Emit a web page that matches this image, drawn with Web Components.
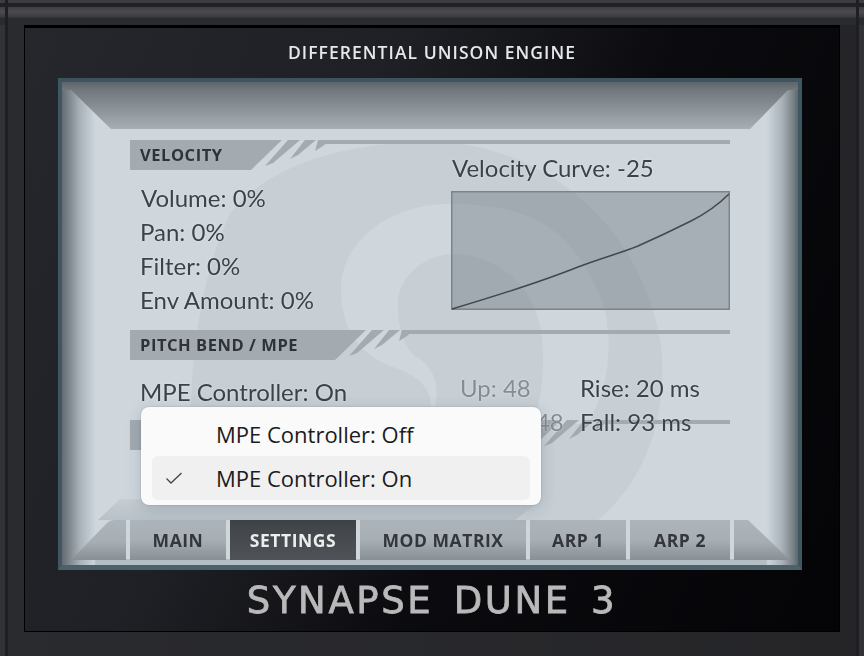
<!DOCTYPE html>
<html lang="en"><head><meta charset="utf-8"><title>Synapse Dune 3</title>
<style>html,body{margin:0;padding:0;background:#27282c}</style></head>
<body>
<synth-app>
  <span slot="title">DIFFERENTIAL UNISON ENGINE</span>
  <synth-display>
    <synth-section>
      <sec-head band="0">VELOCITY</sec-head>
      <param-list slot="left">
        <param-line style="margin-left:1px">Volume: 0%</param-line>
        <param-line>Pan: 0%</param-line>
        <param-line>Filter: 0%</param-line>
        <param-line>Env Amount: 0%</param-line>
      </param-list>
      <curve-graph slot="right" label="Velocity Curve: -25"></curve-graph>
    </synth-section>
    <synth-section style="height:90px">
      <sec-head band="84">PITCH BEND / MPE</sec-head>
      <param-list slot="left"><param-line style="margin-top:4px">MPE Controller: On</param-line></param-list>
      <bend-grid slot="right">
        <param-line dim>Up: 48</param-line><param-line>Rise: 20 ms</param-line>
        <param-line dim>Down: 48</param-line><param-line>Fall: 93 ms</param-line>
      </bend-grid>
    </synth-section>
    <synth-section style="height:100px">
      <sec-head band="279"></sec-head>
    </synth-section>
    <tab-bar slot="tabs">
      <synth-tab>MAIN</synth-tab>
      <synth-tab active style="width:126px">SETTINGS</synth-tab>
      <synth-tab style="width:166px">MOD MATRIX</synth-tab>
      <synth-tab>ARP 1</synth-tab>
      <synth-tab style="width:100px">ARP 2</synth-tab>
    </tab-bar>
    <ctx-menu slot="overlay">
      <ctx-item>MPE Controller: Off</ctx-item>
      <ctx-item checked>MPE Controller: On</ctx-item>
    </ctx-menu>
  </synth-display>
  <span slot="logo">SYNAPSE DUNE 3</span>
</synth-app>
<script>
function define(name, css, html, setup){
  customElements.define(name, class extends HTMLElement{
    constructor(){
      super();
      const r=this.attachShadow({mode:'open'});
      r.innerHTML='<style>'+css+'</style>'+(typeof html==='function'?html(this):html);
    }
    connectedCallback(){ if(setup) setup(this,this.shadowRoot); }
  });
}
define('synth-app',`
  :host{display:block;width:864px;height:656px;box-sizing:border-box;overflow:hidden;
    padding:0 5px;
    background:
      linear-gradient(to bottom,#3d3d41 0,#3d3d41 3px,#202124 3px,#202124 7px,#3e3e43 7px,#4a4a4f 12px,#3a3a3f 17px,#2a2b2f 18px,#2a2b2f 25px,transparent 25px),
      linear-gradient(to right,#333337 0,#333337 5px,transparent 5px,transparent 859px,#333337 859px),
      linear-gradient(to right,#2a2b2f,#252528);}
  .outer{box-sizing:border-box;padding:25px 19px 24px 19px;height:656px;
    background:linear-gradient(to right,#1e1f22 0,#1e1f22 3px,transparent 3px,transparent 851px,#1e1f22 851px);}
  .panel{box-sizing:border-box;height:607px;border:solid #000;border-width:3px 1px;border-bottom-width:1px;
    display:flex;flex-direction:column;
    background:linear-gradient(115deg,#25272c 0,#1f2025 35%,#0b0b0f 60%,#040407 100%);}
  .title{height:50px;flex:none;display:flex;align-items:center;justify-content:center;
    font:600 17.5px "Open Sans",sans-serif;letter-spacing:1.05px;color:#e6e7e8;filter:blur(.3px);padding-bottom:2px;box-sizing:border-box}
  .mid{flex:none;margin:0 33px}
  .logo{flex:1;display:flex;align-items:center;justify-content:center;
    font:400 37px "DejaVu Sans",sans-serif;letter-spacing:2.6px;word-spacing:6px;color:#b9b9ba;-webkit-text-stroke:.8px #b9b9ba;filter:blur(.3px);white-space:pre;padding-bottom:1px;box-sizing:border-box}
`,`<div class="outer"><div class="panel">
   <div class="title"><slot name="title"></slot></div>
   <div class="mid"><slot></slot></div>
   <div class="logo"><slot name="logo"></slot></div>
 </div></div>`);

define('synth-display',`
  :host{display:block;position:relative;box-sizing:border-box;height:492px;width:744px;
    border:solid #3f5760;border-width:4px 4px 5px 4px;border-color:#3d545c #3f5760 #4c626b #3f5760;
    background:
      linear-gradient(to bottom,#5c656b 0,#70777d 8px,transparent 8px),
      linear-gradient(to right,#646c72 0,#7a8288 6px,#a9b2b8 18px,#cbd3da 32px,transparent 34px),
      linear-gradient(to left,#5b686f 0,#7a8288 5px,#a9b2b8 16px,#cbd3da 30px,transparent 32px),
      linear-gradient(to bottom,transparent 0,transparent 477px,#b3bec4 477px),
      #cfd7dd;}
  .swirl{position:absolute;left:-4px;top:-4px;width:744px;height:492px;pointer-events:none}
  .cap{position:relative;height:39px;margin:8px 10px 11px 9px;
    background:linear-gradient(to bottom,#70777d,#a7afb5);
    clip-path:polygon(0 0,40px 39px,679px 39px,717px 0)}
  .content{position:relative;width:600px;margin-left:68px}
  .tabs{position:relative}
  .over{position:absolute;left:79px;top:325px}
`,`<svg class="swirl" viewBox="60 79 744 492" aria-hidden="true">
    <defs><linearGradient id="low" x1="0" y1="0" x2="0" y2="1"><stop offset="0" stop-color="#c6ced4"/><stop offset="1" stop-color="#b7c1c7"/></linearGradient></defs>
    <path fill="#c7cfd5" d="M232 215C270 165 350 143 432 143C540 143 640 220 662 340C672 410 650 480 600 521L200 521C185 450 190 300 232 215Z"/>
    <path fill="#cfd7dd" d="M395 368C360 356 343 328 343 290C343 240 395 205 450 205C530 205 578 227 607 311C615 350 610 390 590 425L430 425C440 395 425 378 395 368Z"/>
    <path fill="#c7cfd5" d="M417 357C403 345 400 325 400 305C400 275 430 255 455 255C495 255 525 280 538 312C550 350 545 395 535 425L430 425C445 395 440 370 417 357Z"/>
    <path fill="url(#low)" d="M100 521L122 500L541 503L517 521Z"/>
  </svg>
  <div class="cap"></div>
  <div class="content"><slot></slot></div>
  <div class="tabs"><slot name="tabs"></slot></div>
  <div class="over"><slot name="overlay"></slot></div>`);

define('synth-section',`
  :host{display:grid;grid-template-columns:321px 279px;grid-template-rows:30px 1fr;height:190px;box-sizing:border-box;width:600px}
  .h{grid-column:1/3;grid-row:1}
  .l{grid-column:1;grid-row:2;padding:11px 0 0 10px}
  .r{grid-column:2;grid-row:1/3}
`,`<div class="h"><slot></slot></div><div class="l"><slot name="left"></slot></div><div class="r"><slot name="right"></slot></div>`);

define('sec-head',`
  :host{display:grid;height:30px;width:600px}
  svg,.t{grid-area:1/1}
  svg{display:block;width:600px;height:30px}
  .t{padding:0 0 0 10px;font:700 16.5px/30px "Open Sans",sans-serif;letter-spacing:.55px;color:#2f3338;filter:blur(.3px);white-space:nowrap}
`,el=>{
  const b=+el.getAttribute('band')||0;
  const p=(a)=>a.map(([x,y])=>(x+b)+','+y).join(' ');
  return `<svg viewBox="0 0 600 30" aria-hidden="true"><g fill="#a3abb1">
   <polygon points="0,0 ${152+b},0 ${121+b},30 0,30"/>
   <polygon points="${p([[158,0],[170,0],[143,23],[135,26]])}"/>
   <polygon points="${p([[175,0],[186,0],[168,15],[160,19]])}"/>
   <polygon points="${p([[188,0],[200,0],[193,6],[185,11]])}"/>
   <polygon points="${198+b},0 600,0 600,4 ${193+b},4"/></g></svg>
   <div class="t"><slot></slot></div>`;
});

define('param-list',`:host{display:block}`,`<slot></slot>`);
define('param-line',`
  :host{display:block;font:400 24px/34px Lato,sans-serif;color:#3d4248;white-space:nowrap;
    text-shadow:0 0 2px rgba(235,240,245,.8);filter:blur(.3px)}
  :host([dim]){color:#868c92}
`,`<slot></slot>`);

define('bend-grid',`
  :host{display:grid;grid-template-columns:120px 150px;grid-auto-rows:34px;padding:41px 0 0 9px;box-sizing:border-box}
`,`<slot></slot>`);

define('curve-graph',`
  :host{display:block;box-sizing:border-box;height:190px;padding-top:11px}
  .lbl{font:400 24px/34px Lato,sans-serif;color:#3d4248;white-space:nowrap;margin-left:1px;height:40px;text-shadow:0 0 2px rgba(235,240,245,.8);filter:blur(.3px)}
  svg{display:block;width:279px;height:119px}
`,el=>`<div class="lbl">${el.getAttribute('label')}</div>
  <svg viewBox="0 0 279 119" aria-hidden="true">
   <rect x=".75" y=".75" width="277.5" height="117.5" fill="rgba(112,120,128,.42)" stroke="#7d8389" stroke-width="1.5"/>
   <path fill="none" stroke="#43474e" stroke-width="1.5" d="M1 118C48 104 92 90 127 76C150 67 170 62 187 55C205 47 222 39 240 30C254 23 268 13 278 3"/>
  </svg>`);

define('tab-bar',`
  :host{display:flex;gap:4px;height:40px;margin-left:9px;font:700 17.5px "Open Sans",sans-serif}
  svg{display:block;height:40px;flex:none}
`,`<svg width="55" viewBox="0 0 55 40" aria-hidden="true"><defs><linearGradient id="c1" x1="0" y1="0" x2="0" y2="1"><stop offset="0" stop-color="#adb4ba"/><stop offset=".55" stop-color="#a6adb3"/><stop offset="1" stop-color="#878e94"/></linearGradient></defs><path fill="url(#c1)" d="M0 40L36 3Q39 0 43 0H55V40Z"/></svg>
  <slot></slot>
  <svg width="56" viewBox="0 0 56 40" aria-hidden="true"><defs><linearGradient id="c2" x1="0" y1="0" x2="0" y2="1"><stop offset="0" stop-color="#adb4ba"/><stop offset=".55" stop-color="#a6adb3"/><stop offset="1" stop-color="#878e94"/></linearGradient></defs><path fill="url(#c2)" d="M0 0H14L56 40H0Z"/></svg>`);

define('synth-tab',`
  :host{display:flex;align-items:center;justify-content:center;flex:none;width:96px;height:40px;box-sizing:border-box;
    background:linear-gradient(to bottom,#adb4ba 0,#a7aeb4 50%,#888f95 100%);color:#33373c;letter-spacing:.55px;white-space:nowrap}
  :host([active]){background:linear-gradient(to bottom,#3f4246,#4f5257);color:#eceded}
  span{filter:blur(.3px)}
`,`<span><slot></slot></span>`);

define('ctx-menu',`
  :host{display:block;box-sizing:border-box;width:400px;height:98px;padding:5px 11px;border-radius:8px;background:#fafafa;
    box-shadow:0 4px 16px rgba(40,50,60,.18),0 0 2px rgba(40,50,60,.25)}
`,`<slot></slot>`);
define('ctx-item',`
  :host{display:flex;align-items:center;height:44px;border-radius:6px;font:400 22px "Open Sans",sans-serif;color:#1b1b1b;white-space:nowrap;padding-left:64px;position:relative}
  :host([checked]){background:#f0f0f0}
  svg{position:absolute;left:13px;top:15px;display:none}
  :host([checked]) svg{display:block}
`,`<svg width="18" height="14" viewBox="0 0 18 14" aria-hidden="true"><path d="M1.5 7.5L6 12L16.5 2" fill="none" stroke="#444" stroke-width="1.3"/></svg><slot></slot>`);
</script>
</body></html>
